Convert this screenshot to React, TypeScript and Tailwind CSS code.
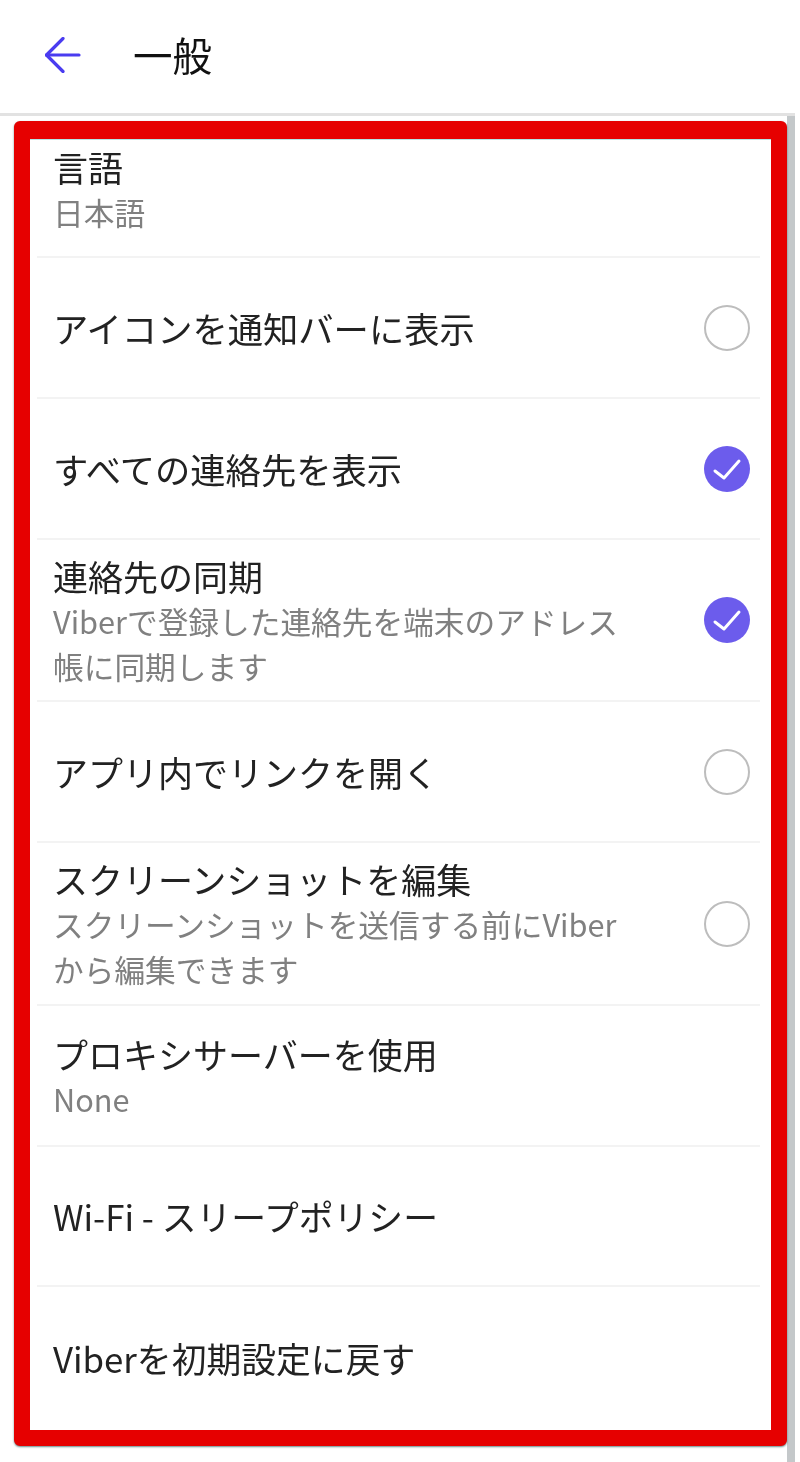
const font = "font-['Noto_Sans_CJK_JP','Noto_Sans',sans-serif]";

type Row = {
  title: string;
  sub?: string[];
  toggle?: "on" | "off";
  height: string;
  top?: string;
  size?: string;
};

const rows: Row[] = [
  { title: "言語", sub: ["日本語"], height: "h-[119px]", top: "items-start pt-[5px]" },
  { title: "アイコンを通知バーに表示", toggle: "off", height: "h-[141px]", size: "text-[35.3px]" },
  { title: "すべての連絡先を表示", toggle: "on", height: "h-[141px]", size: "text-[35.3px]" },
  {
    title: "連絡先の同期",
    sub: ["Viberで登録した連絡先を端末のアドレス", "帳に同期します"],
    toggle: "on",
    height: "h-[162px]",
  },
  { title: "アプリ内でリンクを開く", toggle: "off", height: "h-[141px]" },
  {
    title: "スクリーンショットを編集",
    sub: ["スクリーンショットを送信する前にViber", "から編集できます"],
    toggle: "off",
    height: "h-[163px]",
  },
  { title: "プロキシサーバーを使用", sub: ["None"], height: "h-[141px]" },
  { title: "Wi-Fi - スリープポリシー", height: "h-[140px]", size: "text-[34.8px]" },
  { title: "Viberを初期設定に戻す", height: "h-[143px]", size: "text-[34.8px]" },
];

function Toggle({ on }: { on: boolean }) {
  if (on) {
    return (
      <svg viewBox="0 0 46 46" className="w-[46px] h-[46px] shrink-0">
        <circle cx="23" cy="23" r="23" fill="#6c5cec" />
        <path d="M11 25l9 7 15-17" fill="none" stroke="#fff" strokeWidth="3" strokeLinecap="round" strokeLinejoin="round" />
      </svg>
    );
  }
  return <div className="w-[46px] h-[46px] shrink-0 rounded-full border-2 border-[#bdbdbd]" />;
}

export default function App() {
  return (
    <div className={`${font} w-[800px] h-[1462px] bg-white overflow-hidden`}>
      <div className="w-[795px] h-full flex flex-col">
        <header className="h-[116px] shrink-0 flex items-center border-b-[3px] border-[#e2e2e2] pl-[45px] pb-[6px]">
          <svg viewBox="0 0 36 36" className="w-9 h-9 translate-y-px text-[#4a3cf0]" fill="none" stroke="currentColor" strokeWidth="3.2" strokeLinecap="round" strokeLinejoin="round">
            <path d="M1.5 18H34" />
            <path d="M18 1.5 1.5 18 18 34.5" />
          </svg>
          <h1 className="ml-[52px] text-[39.5px] leading-none text-[#111] blur-[0.4px]">一般</h1>
        </header>
        <div className="flex-1 border-r-[8px] border-[#c4c8ca] pt-[5px] pl-[14px]">
          <div className="w-[773px] h-[1325px] border-[16px] border-t-[18px] border-[#e60000] rounded-[6px] bg-white shadow-[0_1px_2px_rgba(0,60,60,0.6),inset_0_1px_0_#b5e3e3]">
            {rows.map((row, i) => (
              <div
                key={row.title}
                className={`${row.height} ${row.top ?? "items-center"} ml-[7px] mr-[11px] pl-[18px] pr-[10px] flex justify-between ${i < rows.length - 1 ? "border-b-2 border-[#f3f3f3]" : ""}`}
              >
                <div className="-ml-[2px] blur-[0.4px]">
                  <div className={`${row.size ?? "text-[35px]"} leading-[45px] text-[#222]`}>{row.title}</div>
                  {row.sub?.map((line) => (
                    <div key={line} className="text-[30.7px] leading-[45px] text-[#808080]">{line}</div>
                  ))}
                </div>
                {row.toggle && <Toggle on={row.toggle === "on"} />}
              </div>
            ))}
          </div>
        </div>
      </div>
    </div>
  );
}
